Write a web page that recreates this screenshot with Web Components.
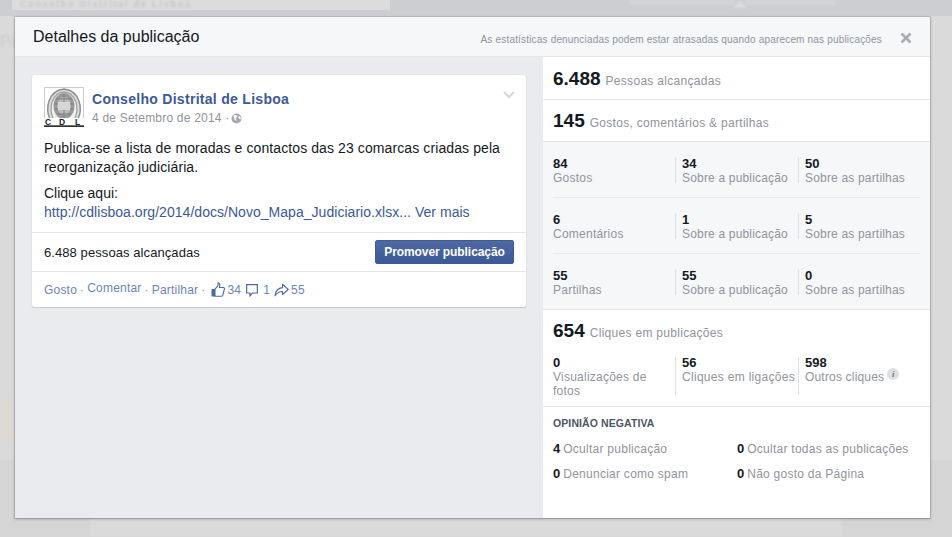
<!DOCTYPE html>
<html lang="pt"><head><meta charset="utf-8"><title>Detalhes da publicação</title>
<style>
html,body{margin:0;height:537px;overflow:hidden}
body{font-family:"Liberation Sans",Arial,sans-serif;background:#dadada}
</style></head><body>
<insights-page>
  <post-details></post-details>
</insights-page>
<template id="t-page"><style>
:host{display:block;position:relative;width:952px;height:537px;box-sizing:border-box;padding:17px 22px 19px 15px;overflow:hidden}
.bg{position:absolute;inset:0;background:#dadada;overflow:hidden}
.top{position:absolute;left:0;right:0;top:0;height:16px;background:#cdced2}
.search{position:absolute;left:12px;top:0;width:378px;height:10px;box-sizing:border-box;background:#dcdcdd;color:#c6c6c8;font:bold 9px/9px "Liberation Sans",sans-serif;letter-spacing:1.8px;padding-left:8px;white-space:nowrap;overflow:hidden}
.search span{filter:blur(1px);display:inline-block}
.blob{position:absolute;top:0;height:5px;background:#d4d5d8;filter:blur(1px)}
.tri{position:absolute;top:1px;width:0;height:0;border:9px solid transparent;border-top:0;border-bottom:7px solid #d9dadc;filter:blur(.8px)}
.nav{position:absolute;left:0;top:33px;color:#cbcbcc;font:16px "Liberation Sans",sans-serif;filter:blur(1px)}
.band{position:absolute;left:0;width:15px;top:400px;height:40px;background:#dddad5;filter:blur(1.500px)}
.low{position:absolute;left:0;right:0;top:460px;bottom:0;background:#d6d5d5}
.low2{position:absolute;left:90px;right:110px;top:518px;bottom:0;background:#dadada;filter:blur(1px)}
.wrap{position:relative;height:100%}
</style><div class="bg" aria-hidden="true"><div class="low"></div><div class="low2"></div><div class="top"></div><div class="search"><span>Conselho Distrital de Lisboa</span></div><div class="blob" style="left:630px;width:105px"></div><div class="blob" style="left:745px;width:90px"></div><div class="tri" style="left:731px"></div><div class="nav">Pa</div><div class="band"></div></div><div class="wrap"><slot></slot></div></template>

<template id="t-details"><style>
:host{display:flex;flex-direction:column;height:501px;width:915px;background:#e9ebee;box-shadow:0 0 0 1px rgba(0,0,0,.13),0 1px 3px rgba(0,0,0,.25);color:#141823}
header{height:40px;box-sizing:border-box;flex:none;background:#f6f7f9;border-bottom:1px solid #e5e6e9;display:flex;align-items:center;padding:0 0 0 18px}
h1{font:400 16px "Liberation Sans",sans-serif;margin:0 auto 0 0;color:#141823}
.hint{font-size:10px;letter-spacing:.18px;color:#90949c;margin-top:5px}
.x{width:48px;flex:none;display:flex;justify-content:center;margin-top:2px}
.body{flex:1;display:flex;min-height:0}
.left{flex:1;padding:18px 17px 0}
.right{width:387px;flex:none;background:#fff;box-sizing:border-box;display:flex;flex-direction:column}
</style><header><h1>Detalhes da publicação</h1><span class="hint">As estatísticas denunciadas podem estar atrasadas quando aparecem nas publicações</span><span class="x"><svg width="12" height="12" viewBox="0 0 12 12"><path d="M1.500 1.500l9 9M10.500 1.500l-9 9" stroke="#a9acb2" stroke-width="2.600"/></svg></span></header>
<div class="body"><div class="left"><post-card></post-card></div><div class="right"><stat-panel></stat-panel></div></div></template>

<template id="t-card"><style>
:host{display:block;width:494px;height:232px;box-sizing:border-box;background:#fff;box-shadow:0 0 1px rgba(0,0,0,.2),0 1px 1px rgba(0,0,0,.12);border-radius:2px;color:#141823;font-size:14px}
.head{display:flex;height:54px;box-sizing:border-box;padding:12px 12px 0;position:relative}
.logo{width:40px;height:40px;flex:none;margin-right:8px}
.who{padding-top:3px}
.name{font:bold 14px "Liberation Sans",sans-serif;letter-spacing:.29px;color:#3b5998;line-height:18px}
.date{font-size:12px;letter-spacing:.2px;color:#90949c;line-height:16px;margin-top:2px;display:flex;align-items:center;gap:2px}
.chev{position:absolute;right:11px;top:16px}
.msg{padding:10px 12px 0;line-height:19px;font-size:14px;height:103px;box-sizing:border-box}
p{margin:0 0 7px}
.p1{letter-spacing:.1px}
a{color:#3b5998;letter-spacing:.035px}
.reach{height:40px;box-sizing:border-box;border-top:1px solid #e5e6e9;border-bottom:1px solid #e5e6e9;display:flex;align-items:center;justify-content:space-between;padding:0 12px;font-size:13px;letter-spacing:.08px}
.btn{width:139px;height:24px;box-sizing:border-box;background:linear-gradient(#4e69a2,#3b5998);border:1px solid #3f5a94;border-radius:2px;color:#fff;font-weight:bold;font-size:12px;letter-spacing:-.08px;display:flex;align-items:center;justify-content:center;white-space:nowrap;margin-top:-1px}
.acts{display:flex;align-items:center;height:35px;padding:0 12px;font-size:12px;letter-spacing:.2px;color:#6d84b4;white-space:nowrap}
.acts i{font-style:normal;color:#90949c;margin:0 3px}
.acts .u2{position:relative;top:-2px}
.ic{display:inline-flex;align-items:center}
.ic svg{margin-right:2px}
.c1{margin-left:3px}.c2{margin-left:5px}.c3{margin-left:4px}
.c2 svg{margin-right:5px}
</style>
<div class="head"><company-logo class="logo"></company-logo><div class="who"><div class="name">Conselho Distrital de Lisboa</div><div class="date"><span>4 de Setembro de 2014 ·</span><svg width="11" height="11" viewBox="0 0 12 12"><circle cx="6" cy="6" r="5.500" fill="#a4a7ad"/><path d="M3 1.800l3 .6 1 2-2 1 1.200 3.400-2-1.200L3 5zM8.500 3l2 1.500v2.500L8 5.500z" fill="#fff"/></svg></div></div>
<svg class="chev" width="12" height="8" viewBox="0 0 12 8"><path d="M1 1l5 5 5-5" fill="none" stroke="#d3d6db" stroke-width="2"/></svg></div>
<div class="msg"><p class="p1">Publica-se a lista de moradas e contactos das 23 comarcas criadas pela reorganização judiciária.</p><p style="margin:0">Clique aqui:<br><a>http://cdlisboa.org/2014/docs/Novo_Mapa_Judiciario.xlsx...</a> <a>Ver mais</a></p></div>
<div class="reach"><span>6.488 pessoas alcançadas</span><span class="btn">Promover publicação</span></div>
<div class="acts"><span>Gosto</span><i>·</i><span class="u2">Comentar</span><i>·</i><span>Partilhar</span><i>·</i>
<span class="ic c1"><svg width="14" height="15" viewBox="0 0 14 15"><path d="M.5 7H4v7.500H.500z" fill="#4e69a2"/><path d="M4 7.200L7 3.500V.8c1.700 0 2.300 1.700 1.400 4.700h4c1 0 1.300 1 .9 1.800l-1.600 6.200c-.2.500-.6.800-1.200.8H4z" fill="none" stroke="#4e69a2" stroke-width="1.100"/></svg>34</span>
<span class="ic c2"><svg width="12" height="14" viewBox="0 0 12 14"><path d="M.6 1.600h10.800v8.400H6.500l-2.500 2.800V10H.6z" fill="none" stroke="#4e69a2" stroke-width="1.200"/></svg>1</span>
<span class="ic c3"><svg width="15" height="14" viewBox="0 0 15 14"><path d="M8.500 1.200L14.200 6.500 8.500 11.500V8.500C5 8.500 3 9.700 1 12.800 1.500 8 4.300 5 8.500 4.600z" fill="none" stroke="#4e69a2" stroke-width="1.100" stroke-linejoin="round"/></svg>55</span></div></template>

<template id="t-logo"><style>:host{display:block}svg{display:block}</style>
<svg width="40" height="40" viewBox="0 0 40 40"><rect width="40" height="40" fill="#fff"/><path d="M.5 38V.5h39V38" fill="none" stroke="#c9cbce"/><path d="M6 32C2 24 2 4 20 2c18 2 18 22 14 30" fill="#dcdcdc" stroke="#8f8f8f" stroke-width="1.500"/><path d="M9 31C5 22 7 6 20 5c13 1 15 17 11 26" fill="#efefef" stroke="#a3a3a3" stroke-width="1.300"/><ellipse cx="20" cy="19" rx="10.500" ry="13" fill="#989898"/><ellipse cx="20" cy="19" rx="7" ry="9" fill="#bcbcbc"/><path d="M12 12h16M11 17h18M11 22h18M13 27h14M20 7v24" stroke="#7f7f7f" stroke-width="1"/><rect x="14" y="15" width="12" height="8" fill="#d6d6d6"/><rect y="31" width="40" height="9" fill="#fff"/><rect x="0" y="38.300" width="40" height="1.700" fill="#2f2f2f"/><text x="1" y="37.500" font-family="Liberation Sans" font-weight="bold" font-size="8.500" fill="#222">C</text><text x="15" y="37.500" font-family="Liberation Sans" font-weight="bold" font-size="8.500" fill="#222">D</text><text x="31" y="37.500" font-family="Liberation Sans" font-weight="bold" font-size="8.500" fill="#222">L</text></svg></template>

<template id="t-summary"><style>
:host{display:block;box-sizing:border-box;height:42px;padding:0 10px;border-bottom:1px solid #e5e6e9;font-size:12px;letter-spacing:.3px;color:#90949c;line-height:1}
.r{display:flex;align-items:baseline;gap:5px;padding-top:11px}
:host([lead]) .r{padding-top:12px}
b{font-size:19px;letter-spacing:0;color:#141823}
</style><div class="r"><b><slot name="n"></slot></b><span><slot></slot></span></div></template>

<template id="t-stat"><style>
:host{display:block;box-sizing:border-box;padding:0 0 0 6px;border-left:1px solid #dddfe2;font-size:12px;letter-spacing:.18px;line-height:14px;color:#90949c}
:host([first]){border-left:0;padding-left:0;letter-spacing:.24px}
b{display:block;font-size:13px;letter-spacing:0;color:#141823;line-height:14px;margin-top:-1px}
.i{display:inline-block;vertical-align:top;position:relative;top:-2px;width:12px;height:12px;border-radius:50%;background:#dfe0e3;color:#6f7278;font:italic bold 9px/12px "Liberation Serif",serif;text-align:center;margin-left:3px;letter-spacing:0}
</style><b><slot name="n"></slot></b><slot></slot></template>

<template id="t-panel"><style>
:host{display:flex;flex-direction:column;height:100%;color:#90949c}
stat-summary[lead]{height:43px}
.block{background:#f6f7f9;border-bottom:1px solid #e5e6e9;padding:0 10px;height:168px;box-sizing:border-box}
.row{display:grid;grid-template-columns:122px 123px 1fr;height:56px;box-sizing:border-box;padding-top:16px;border-bottom:1px solid #e9eaed}
.row:last-child{border:0}
.row stat-cell{height:25px}
.clicks{height:97px;box-sizing:border-box;border-bottom:1px solid #e5e6e9}
.clicks stat-summary{border:0;height:36px}
.crow{display:grid;grid-template-columns:122px 123px 1fr;padding:0 10px;margin-top:11px}
.crow stat-cell{height:38px}
.wide{letter-spacing:.3px}
.neg{padding:9px 10px 0;font-size:12px;letter-spacing:.26px}
h2{font:bold 10.500px/14px "Liberation Sans",sans-serif;letter-spacing:.1px;color:#4e5665;margin:0 0 12px;text-transform:uppercase}
.g{display:grid;grid-template-columns:184px 1fr;row-gap:11px;line-height:14px}
.g b{color:#141823;font-size:13px;letter-spacing:0;margin-right:3px}
</style>
<stat-summary lead><span slot="n">6.488</span>Pessoas alcançadas</stat-summary>
<stat-summary><span slot="n">145</span>Gostos, comentários &amp; partilhas</stat-summary>
<div class="block">
<div class="row"><stat-cell first><span slot="n">84</span>Gostos</stat-cell><stat-cell><span slot="n">34</span>Sobre a publicação</stat-cell><stat-cell><span slot="n">50</span>Sobre as partilhas</stat-cell></div>
<div class="row"><stat-cell first><span slot="n">6</span>Comentários</stat-cell><stat-cell><span slot="n">1</span>Sobre a publicação</stat-cell><stat-cell><span slot="n">5</span>Sobre as partilhas</stat-cell></div>
<div class="row"><stat-cell first><span slot="n">55</span>Partilhas</stat-cell><stat-cell><span slot="n">55</span>Sobre a publicação</stat-cell><stat-cell><span slot="n">0</span>Sobre as partilhas</stat-cell></div>
</div>
<div class="clicks"><stat-summary><span slot="n">654</span>Cliques em publicações</stat-summary>
<div class="crow"><stat-cell first><span slot="n">0</span>Visualizações de fotos</stat-cell><stat-cell class="wide"><span slot="n">56</span>Cliques em ligações</stat-cell><stat-cell info><span slot="n">598</span>Outros cliques</stat-cell></div></div>
<div class="neg"><h2>Opinião negativa</h2><div class="g"><span><b>4</b>Ocultar publicação</span><span><b>0</b>Ocultar todas as publicações</span><span><b>0</b>Denunciar como spam</span><span><b>0</b>Não gosto da Página</span></div></div>
</template>

<script>
function def(tag,tid,extra){customElements.define(tag,class extends HTMLElement{constructor(){super();const r=this.attachShadow({mode:'open'});r.appendChild(document.getElementById(tid).content.cloneNode(true));if(extra)extra(this,r)}})}
def('insights-page','t-page');
def('company-logo','t-logo');
def('post-card','t-card');
def('stat-summary','t-summary');
def('stat-cell','t-stat',(h,r)=>{if(h.hasAttribute('info')){const s=document.createElement('span');s.className='i';s.textContent='i';r.appendChild(s)}});
def('stat-panel','t-panel');
def('post-details','t-details');
</script>
</body></html>
